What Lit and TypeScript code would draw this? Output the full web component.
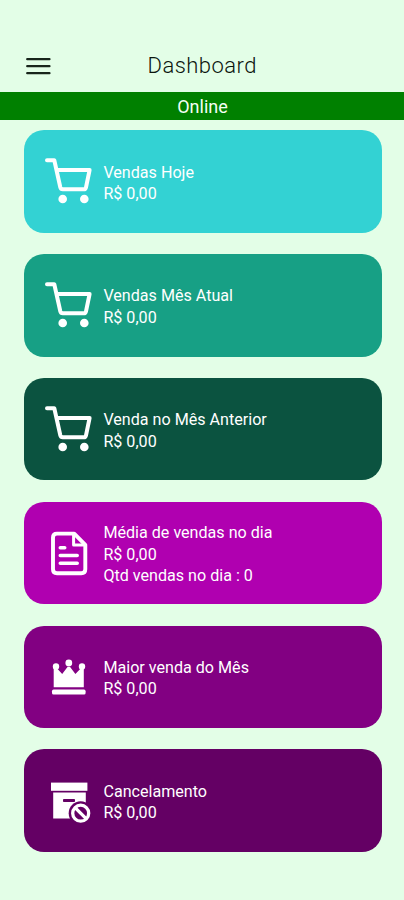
import { LitElement, html, css, svg } from "lit";
import { customElement } from "lit/decorators.js";

const cart = svg`
  <g fill="none" stroke="#fff" stroke-width="4" stroke-linecap="round" stroke-linejoin="round">
    <path d="M11 15.5H18.3L24.3 42.6Q24.8 44.6 26.8 44.6H47.6Q49.6 44.6 50 42.6L53.6 25.3H20.6"/>
  </g>
  <circle cx="26.7" cy="54.3" r="4.3" fill="#fff"/><circle cx="48.3" cy="54.3" r="4.3" fill="#fff"/>`;

const note = svg`
  <g fill="none" stroke="#fff" stroke-width="3.9" stroke-linejoin="round" stroke-linecap="round">
    <path d="M21 13.2H38.2L49.3 24.4V48.8Q49.3 52.8 45.3 52.8H21Q17 52.8 17 48.8V17.2Q17 13.2 21 13.2Z"/>
    <path d="M37.6 13.5V24.7H48.8" stroke-width="3" stroke-linecap="butt"/>
    <path d="M24.3 27.3H28.7M24.3 35.1H41.2M24.3 42.9H41.2" stroke-width="3.6"/>
  </g>`;

const crown = svg`
  <g fill="#fff">
    <circle cx="20" cy="20.8" r="3.2"/><circle cx="32.8" cy="17.4" r="3.4"/><circle cx="46" cy="20.8" r="3.2"/>
    <path d="M17.7 22H20.2L26.2 28.3L31.5 21.5H34.1L39.4 28.3L45.6 22H47.8V41.7H17.7Z"/>
    <rect x="16" y="44" width="33.6" height="5" rx="1.6"/>
  </g>`;

const cancel = svg`
  <rect x="15" y="12.8" width="36.4" height="8.2" fill="#fff"/>
  <path d="M17.2 22.8H49.8V48.6H17.2Z" fill="#fff"/>
  <rect x="27" y="29.2" width="12" height="3" rx=".8" fill="#640064"/>
  <circle cx="44.7" cy="43.4" r="12" fill="#640064"/>
  <g fill="none" stroke="#fff" stroke-width="3.3"><circle cx="44.7" cy="43.4" r="8"/><path d="M39.3 38L50.1 48.8"/></g>`;

const cards = [
  { tone: "cyan", icon: cart, dy: 14.7, lines: ["Vendas Hoje", "R$ 0,00"] },
  { tone: "teal", icon: cart, dy: 14.7, lines: ["Vendas Mês Atual", "R$ 0,00"] },
  { tone: "forest", icon: cart, dy: 14.7, lines: ["Venda no Mês Anterior", "R$ 0,00"] },
  { tone: "magenta", icon: note, dy: 18.4, lines: ["Média de vendas no dia", "R$ 0,00", "Qtd vendas no dia : 0"] },
  { tone: "purple", icon: crown, dy: 19.6, lines: ["Maior venda do Mês", "R$ 0,00"] },
  { tone: "plum", icon: cancel, dy: 20.8, lines: ["Cancelamento", "R$ 0,00"] },
];

@customElement("app-root")
export class AppRoot extends LitElement {
  static styles = css`
    :host { display: block; box-sizing: border-box; height: 900px; overflow: hidden; background: #e3fee7; font-family: Roboto, sans-serif; }
    header { box-sizing: border-box; height: 91.5px; padding: 40px 0 0 24.5px; display: grid; grid-template-columns: 26px 1fr 50px; align-items: center; }
    h1 { margin: 0; text-align: center; font-size: 22px; line-height: 52px; font-weight: 300; letter-spacing: .45px; color: #0c150e; }
    .status { height: 28px; background: #008000; color: #f4fff4; font-size: 18px; line-height: 29px; text-align: center; padding-left: 1px; }
    main { display: flex; flex-direction: column; gap: 21.3px; padding: 10.9px 22px 0 23.5px; }
    .card { height: 102.5px; border-radius: 20px; display: flex; align-items: center; color: #fff; }
    .icon { display: block; flex: none; width: 64px; height: 102.5px; margin-left: 12.5px; }
    .text { margin-left: 3.4px; padding-top: 3px; font-size: 16.12px; line-height: 21.6px; white-space: nowrap; }
    .cyan { background: #33d2d3; }
    .teal { background: #17a085; }
    .forest { background: #0b5340; }
    .magenta { background: #b000b0; }
    .purple { background: #820082; }
    .plum { background: #640064; }
  `;

  render() {
    return html`
      <header>
        <svg width="26" height="20" viewBox="0 0 26 20" fill="none" stroke="#18251b" stroke-width="2.2" stroke-linecap="round">
          <path d="M2.2 3.2H24.5M2.2 10.2H24.5M2.2 17.2H24.5"/>
        </svg>
        <h1>Dashboard</h1>
      </header>
      <div class="status">Online</div>
      <main>
        ${cards.map((c) => html`
          <section class="card ${c.tone}">
            <svg class="icon" viewBox="0 0 64 102.5"><g transform="translate(0 ${c.dy})">${c.icon}</g></svg>
            <div class="text">${c.lines.map((l) => html`<div>${l}</div>`)}</div>
          </section>`)}
      </main>`;
  }
}
